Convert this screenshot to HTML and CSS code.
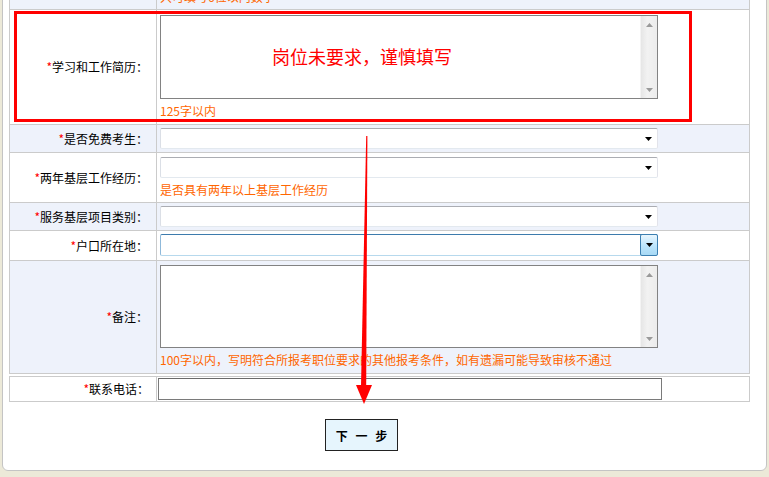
FILE: index.html
```html
<!DOCTYPE html>
<html lang="zh-CN">
<head>
<meta charset="utf-8">
<title>报名信息填写</title>
<link rel="stylesheet" href="styles.css">
</head>
<body>
<div class="page">
  <div class="panel">
    <table class="form form-main">
      <colgroup><col class="c-label"><col class="c-field"></colgroup>
      <tr class="alt row-sh">
        <td class="label"><span class="req">*</span>联系邮编：</td>
        <td class="field">
          <div class="select"><span class="select-value"></span><span class="select-arrow"><svg width="7" height="4" viewBox="0 0 7 4"><path d="M0 0h7L3.5 4z" fill="#000"/></svg></span></div>
          <div class="hint">只可填写6位以内数字</div>
        </td>
      </tr>
      <tr class="row-ta1">
        <td class="label"><span class="req">*</span>学习和工作简历：</td>
        <td class="field">
          <div class="textarea"><div class="ta-space"></div><div class="scrollbar"><span class="sb-btn"><svg width="7" height="4" viewBox="0 0 7 4"><path d="M0 4h7L3.5 0z" fill="#9a9a9a"/></svg></span><span class="sb-btn"><svg width="7" height="4" viewBox="0 0 7 4"><path d="M0 0h7L3.5 4z" fill="#9a9a9a"/></svg></span></div></div>
          <div class="hint hint-ta1">125字以内</div>
        </td>
      </tr>
      <tr class="alt row-sel">
        <td class="label"><span class="req">*</span>是否免费考生：</td>
        <td class="field">
          <div class="select"><span class="select-value"></span><span class="select-arrow"><svg width="7" height="4" viewBox="0 0 7 4"><path d="M0 0h7L3.5 4z" fill="#000"/></svg></span></div>
        </td>
      </tr>
      <tr class="row-sh">
        <td class="label"><span class="req">*</span>两年基层工作经历：</td>
        <td class="field">
          <div class="select"><span class="select-value"></span><span class="select-arrow"><svg width="7" height="4" viewBox="0 0 7 4"><path d="M0 0h7L3.5 4z" fill="#000"/></svg></span></div>
          <div class="hint">是否具有两年以上基层工作经历</div>
        </td>
      </tr>
      <tr class="alt row-sel">
        <td class="label"><span class="req">*</span>服务基层项目类别：</td>
        <td class="field">
          <div class="select"><span class="select-value"></span><span class="select-arrow"><svg width="7" height="4" viewBox="0 0 7 4"><path d="M0 0h7L3.5 4z" fill="#000"/></svg></span></div>
        </td>
      </tr>
      <tr class="row-sel row-focus">
        <td class="label"><span class="req">*</span>户口所在地：</td>
        <td class="field">
          <div class="select focus"><span class="select-value"></span><span class="select-arrow"><svg width="7" height="4" viewBox="0 0 7 4"><path d="M0 0h7L3.5 4z" fill="#000"/></svg></span></div>
        </td>
      </tr>
      <tr class="alt row-ta2">
        <td class="label"><span class="req">*</span>备注：</td>
        <td class="field">
          <div class="textarea ta2"><div class="ta-space"></div><div class="scrollbar"><span class="sb-btn"><svg width="7" height="4" viewBox="0 0 7 4"><path d="M0 4h7L3.5 0z" fill="#9a9a9a"/></svg></span><span class="sb-btn"><svg width="7" height="4" viewBox="0 0 7 4"><path d="M0 0h7L3.5 4z" fill="#9a9a9a"/></svg></span></div></div>
          <div class="hint hint-ta2">100字以内，写明符合所报考职位要求的其他报考条件，如有遗漏可能导致审核不通过</div>
        </td>
      </tr>
    </table>

    <table class="form form-phone">
      <colgroup><col class="c-label"><col class="c-field"></colgroup>
      <tr>
        <td class="label label-phone"><span class="req">*</span>联系电话：</td>
        <td class="field field-phone"><div class="input"></div></td>
      </tr>
    </table>

    <div class="actions">
      <button class="next" type="button">下 一 步</button>
    </div>
  </div>

  <div class="redbox"></div>
  <div class="note">岗位未要求，谨慎填写</div>
  <svg class="arrow" width="769" height="477" viewBox="0 0 769 477">
    <polygon points="366.2,136 367.4,136 366.2,386 361,386" fill="#f00"/>
    <polygon points="356,385 372,385 364,404" fill="#f00"/>
  </svg>
</div>
</body>
</html>
```

FILE: styles.css
```css
* {
  box-sizing: border-box;
}

html,
body {
  margin: 0;
  padding: 0;
}

body {
  background: #ece9d8;
  font-family: "Noto Sans CJK SC", "Noto Sans", sans-serif;
  font-size: 12px;
  color: #000;
}

.page {
  position: relative;
  width: 769px;
  height: 477px;
  overflow: hidden;
}

.panel {
  margin: -20px 2px 0 2px;
  height: 491px;
  background: #fff;
  border: 1px solid #c4c4c4;
  border-radius: 6px;
  padding: 0 0 0 6px;
  overflow: hidden;
}

.form {
  width: 741px;
  border-collapse: collapse;
  table-layout: fixed;
}

.form td {
  border: 1px solid #cbcbcb;
  padding: 0;
}

.form-main {
  margin-top: -22px;
}

.c-label {
  width: 147px;
}

.label {
  text-align: right;
  vertical-align: middle;
  white-space: nowrap;
  line-height: 16px;
}

.form td.label {
  padding-right: 8px;
}

.req {
  color: #f00;
}

.alt td {
  background: #eef2fb;
}

.form td.field {
  vertical-align: top;
  padding: 3px 3px 3px 3px;
}

.row-focus td.field {
  padding: 3px 3px 4px 3px;
}

.row-sh td.field {
  padding: 4px 3px 0 3px;
}

.row-ta1 td.field {
  padding: 5px 3px 1px 3px;
}

.row-ta2 td.field {
  padding: 4px 3px 1px 3px;
}

.hint {
  color: #ff6600;
  line-height: 24px;
  white-space: nowrap;
}

.hint-ta1 {
  line-height: 24px;
}

.hint-ta2 {
  line-height: 24px;
}

/* select box */
.select {
  display: flex;
  align-items: center;
  width: 498px;
  height: 21px;
  border: 1px solid;
  border-color: #abadb3 #e2e3ea #e3e9ef #dbdfe6;
  border-radius: 2px;
  background: #fff;
}

.select-value {
  flex: 1;
}

.select-arrow {
  width: 17px;
  height: 100%;
  display: flex;
  align-items: center;
  justify-content: center;
}

.select.focus {
  height: 22px;
  border-color: #3d7bad #a4c9e3 #b7d9ed #8fb9da;
}

.select.focus .select-arrow {
  width: 18px;
  height: 22px;
  margin: 0 -1px 0 0;
  border: 1px solid #3c7fb1;
  border-radius: 2px;
  background: linear-gradient(#eaf6fd, #bee6fd 50%, #a7d9f5);
}

/* textarea */
.textarea {
  display: flex;
  width: 498px;
  height: 84px;
  border: 1px solid #828282;
  background: #fff;
}

.textarea.ta2 {
  height: 83px;
}

.ta-space {
  flex: 1;
}

.scrollbar {
  width: 17px;
  display: flex;
  flex-direction: column;
  justify-content: space-between;
  background: linear-gradient(to right, #e6e6e6, #f2f2f2 40%, #ececec);
  border-left: 1px solid #f4f4f4;
}

.sb-btn {
  height: 17px;
  display: flex;
  align-items: center;
  justify-content: center;
}

/* phone row */
.form-phone {
  margin-top: 2px;
}

.form td.field-phone {
  padding: 1px 0 1px 1px;
  vertical-align: middle;
}

.form td.label-phone {
  padding-right: 7px;
}

.input {
  width: 504px;
  height: 22px;
  border: 1px solid #7a7a7a;
  border-top-color: #6a6a6a;
  background: #fff;
}

/* actions */
.actions {
  padding: 17px 0 0 316px;
}

.next {
  display: block;
  width: 73px;
  height: 32px;
  padding: 0;
  border: 1px solid #222;
  background: #e6f5fd;
  font-family: "Noto Sans CJK SC", "Noto Sans", sans-serif;
  font-size: 12px;
  font-weight: bold;
  color: #000;
  word-spacing: 5px;
}

/* annotations drawn over the screenshot */
.redbox {
  position: absolute;
  left: 14px;
  top: 11px;
  width: 678px;
  height: 111px;
  border: 3px solid #f00;
}

.note {
  position: absolute;
  left: 272px;
  top: 44px;
  color: #f00;
  font-size: 18px;
  line-height: 24px;
  white-space: nowrap;
}

.arrow {
  position: absolute;
  left: 0;
  top: 0;
  pointer-events: none;
}
```
